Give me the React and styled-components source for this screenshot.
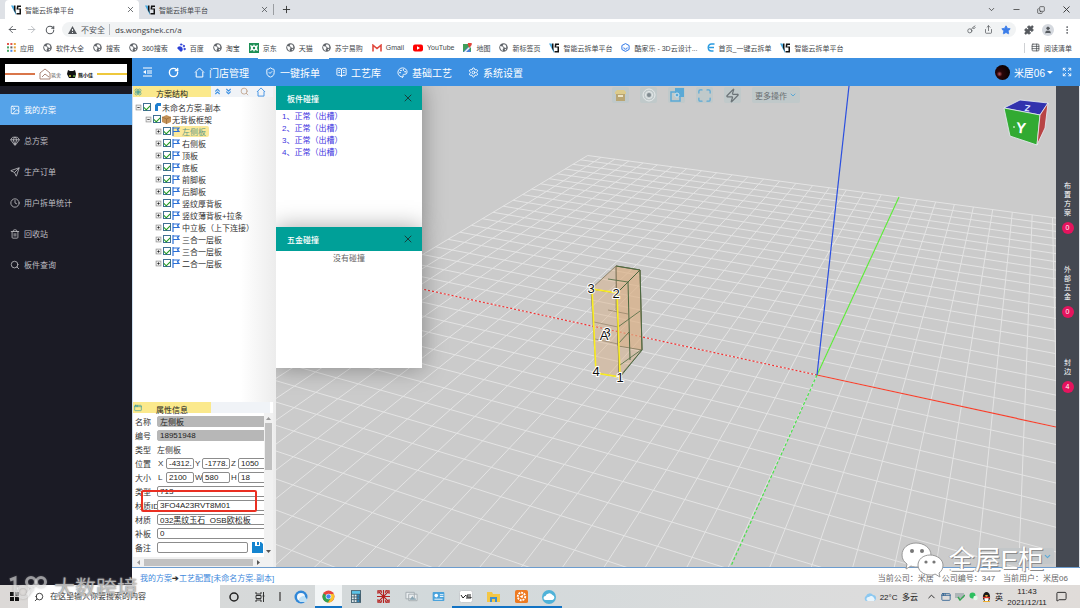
import React from "react";
import styled, { createGlobalStyle, css } from "styled-components";
import {
  ArrowLeft, ArrowRight, RotateCw, Key, Share, Star, Puzzle, User, EllipsisVertical,
  ChevronDown, ChevronUp, Minus, Copy, X, Plus, ShieldCheck, BookOpenText, Palette, Settings,
  Image, Gem, Send, Clock, Trash2, Search, ChevronsUp, ChevronsDown, Zap, Maximize, Expand,
  TableProperties, MessageSquare, PawPrint, Flower, AppWindow, Disc,
} from "lucide-react";

const GlobalStyle = createGlobalStyle`
  * { box-sizing: border-box; }
  body {
    margin: 0;
    font-family: "Liberation Sans", "Noto Sans CJK SC", sans-serif;
    font-size: 8px;
    color: #333;
    overflow: hidden;
  }
  button, input { font: inherit; color: inherit; }
  button { border: 0; padding: 0; background: none; cursor: pointer; }
  ul { list-style: none; margin: 0; padding: 0; }
  a { color: inherit; text-decoration: none; }
  svg { display: block; flex: none; }
`;

const Page = styled.div`
  display: flex;
  flex-direction: column;
  min-height: 100vh;
`;

/* ---------- browser ---------- */

const TabBar = styled.div`
  display: flex;
  align-items: center;
  height: 19px;
  background: #dee1e6;
  padding-left: 5px;
`;

const Tab = styled.div`
  display: flex;
  align-items: center;
  gap: 4px;
  width: 134px;
  height: 19px;
  padding: 0 4px 0 6px;
  font-size: 7px;
  color: #45494d;
  border-radius: 4px 4px 0 0;
  background: ${props => props.$active ? '#fff' : 'transparent'};

  button { margin-left: auto; }
`;

const NewTab = styled.button`
  border-left: 1px solid #9a9da1;
  padding-left: 7px;
`;

const WindowButtons = styled.div`
  display: flex;
  align-items: center;
  gap: 16px;
  margin-left: auto;
  padding-right: 8px;
`;

const AddressBar = styled.div`
  display: flex;
  align-items: center;
  gap: 8px;
  height: 21px;
  padding: 0 8px 0 7px;
  background: #fff;
  color: #55595e;
`;

const Address = styled.label`
  display: flex;
  flex: 1;
  align-items: center;
  gap: 4px;
  height: 15px;
  margin-left: -1px;
  padding: 0 5px 0 6px;
  border-radius: 8px;
  background: #f1f3f4;

  input {
    flex: 1;
    border: 0;
    border-left: 1px solid #b9bcc0;
    background: none;
    padding: 0 0 0 5px;
    height: 11px;
    font-family: "Open Sans", sans-serif;
    font-size: 8px;
    line-height: 11px;
    color: #3c4043;
  }
`;

const AddressIcons = styled.div`
  display: flex;
  gap: 8px;
`;

const Avatar = styled.span`
  display: flex;
  align-items: center;
  justify-content: center;
  width: 12px;
  height: 12px;
  border-radius: 50%;
  background: #d5d9df;
`;

const Bookmarks = styled.nav`
  display: flex;
  align-items: center;
  gap: 9px;
  height: 18px;
  padding: 0 8px 3px 7px;
  background: #fff;
  font-size: 7px;
  color: #45494d;
  white-space: nowrap;

  a {
    display: flex;
    align-items: center;
    gap: 4px;
  }
  a:last-child {
    margin-left: auto;
    border-left: 1px solid #cfd1d4;
    padding-left: 6px;
  }
`;

/* ---------- application frame ---------- */

const Shell = styled.div`
  display: flex;
  flex: 1;
`;

const Sidebar = styled.aside`
  width: 132px;
  flex: none;
  background: #1b1b25;
`;

const Brand = styled.div`
  height: 28px;
  padding: 6px 5px 4px;
  background: #000;
`;

const SideMenu = styled.nav`
  padding-top: 8px;
`;

const SideLink = styled.a`
  display: flex;
  align-items: center;
  gap: 4px;
  height: 31px;
  padding-left: 10px;
  font-size: 8px;
  color: ${props => props.$active ? '#fff' : '#bdbdc1'};
  background: ${props => props.$active ? '#55a3e9' : 'transparent'};
`;

const Workspace = styled.div`
  display: flex;
  flex: 1;
  flex-direction: column;
  min-width: 0;
`;

const TopNav = styled.header`
  display: flex;
  align-items: center;
  height: 28px;
  padding: 0 8px 0 10px;
  background: #3c90e2;
  color: #fff;
`;

const NavButtons = styled.div`
  display: flex;
  gap: 15px;
  margin-right: 8px;
`;

const NavLink = styled.a`
  display: flex;
  align-items: center;
  gap: 4px;
  height: 28px;
  padding: 0 9px 0 7px;
  font-size: 10px;
  border-top: 1px solid ${props => props.$active ? '#fff' : 'transparent'};
`;

const Account = styled.button`
  display: flex;
  align-items: center;
  gap: 4px;
  margin-left: auto;
  margin-right: 9px;
  font-size: 10px;
`;

const AccountPhoto = styled.span`
  width: 15px;
  height: 15px;
  border-radius: 50%;
  background: radial-gradient(circle at 30% 60%, #b9555a 0, #2a0508 20%, #0b0203 70%);
`;

const Caret = styled.span`
  border: 3px solid transparent;
  border-top-color: #fff;
  border-bottom: 0;
  margin-left: -2px;
`;

const Main = styled.main`
  display: flex;
  flex: 1;
`;

const LeftColumn = styled.div`
  display: flex;
  flex-direction: column;
  width: 144px;
  flex: none;
  border-left: 1px solid #cfe0f0;
  background: linear-gradient(90deg, #fff 108px, #ececec 143px);
`;

const PanelHead = styled.div`
  display: flex;
  align-items: center;
  height: 11px;
  margin-right: 3px;
  background: #f0f3f7;
  color: #3c90e2;
`;

const PanelTitle = styled.h2`
  display: flex;
  align-items: center;
  gap: 14px;
  width: 78px;
  height: 11px;
  margin: 0 2px 0 0;
  padding-left: 1px;
  background: #fbe98c;
  font-size: 8px;
  font-weight: 400;
  line-height: 11px;

  span { color: #222; padding-top: 5px; }
`;

const HeadTools = styled.div`
  display: flex;
  align-items: center;
  gap: 2px;

  button:nth-child(n + 3) { margin-left: 5px; }
`;

const Tree = styled.ul`
  flex: 1;
  padding-top: 4px !important;
`;

const TreeRow = styled.li`
  display: flex;
  align-items: center;
  gap: 1px;
  height: 12px;
  padding-left: ${props => 2 + props.$level * 10}px;
`;

const Expander = styled.button`
  position: relative;
  width: 7px;
  height: 7px;
  transform: scale(0.8);
  border: 1px solid #999;
  background:
    linear-gradient(#222, #222) center / 3px 1px no-repeat,
    linear-gradient(#222, #222) center / 1px ${props => props.$open ? 0 : 3}px no-repeat,
    #f2f2f2;
`;

const TreeLabel = styled.label`
  display: flex;
  align-items: center;
  gap: 1px;
  white-space: nowrap;

  input {
    appearance: none;
    display: grid;
    place-items: center;
    width: 8px;
    height: 8px;
    margin: 0;
    border: 1px solid #3f6f92;
    background: #fff;
  }
  input:checked::after {
    content: "";
    width: 5px;
    height: 3px;
    margin-top: -1px;
    border: solid #1f9a1f;
    border-width: 0 0 1px 1px;
    transform: rotate(-45deg);
  }
`;

const TreeName = styled.span`
  display: flex;
  align-items: center;
  gap: 1px;
  height: 11px;
  ${props => props.$selected && css`
    background: #fbe99a;
    border-radius: 2px;
    padding-right: 3px;
    color: #5f9a86;
  `}
`;

const TreeIcon = styled.span`
  display: flex;
  justify-content: ${props => props.$end ? 'flex-end' : 'flex-start'};
  width: 9px;
`;

const Properties = styled.section`
  position: relative;
  background: #fff;
  margin-right: 3px;
`;

const PropertyBody = styled.div`
  display: flex;
`;

const Form = styled.form`
  flex: 1;
  min-width: 0;
  height: 144px;
  overflow: hidden;
  padding-top: 1px;
`;

const Field = styled.div`
  display: flex;
  align-items: center;
  height: 14px;
  padding-left: 2px;
  white-space: nowrap;

  > label:first-child, > span:first-child {
    width: 22px;
    flex: none;
  }
`;

const Input = styled.input`
  width: ${props => props.$width || 120}px;
  flex: none;
  height: 11px;
  padding: 0 0 0 2px;
  border: 1px solid #8c8c8c;
  border-radius: 2px;
  background: #fff;
  color: #222;

  &:read-only {
    border-color: #b7b7b7;
    background: #b7b7b7;
  }
`;

const Axis = styled.label`
  width: ${props => props.$wide ? 8 : 9}px;
  padding-left: 1px;
  flex: none;
`;

const SaveButton = styled.button`
  margin-left: 4px;
`;

const ScrollY = styled.div`
  display: flex;
  flex-direction: column;
  align-items: center;
  justify-content: space-between;
  width: 9px;
  padding: 3px 0;
  background: #f1f1f1;

  i {
    width: 7px;
    height: 47px;
    margin: 2px 0 auto;
    background: #c1c1c1;
  }
`;

const ScrollX = styled.div`
  display: flex;
  align-items: center;
  gap: 3px;
  height: 10px;
  padding: 0 12px 0 3px;
  background: #f1f1f1;

  i {
    flex: 1;
    height: 7px;
    background: #c1c1c1;
  }
`;

const Marker = styled.div`
  position: absolute;
  left: 8px;
  top: 88px;
  width: 116px;
  height: 22px;
  border: 2px solid #ea2f22;
  border-radius: 2px;
`;

/* ---------- 3D view ---------- */

const Viewport = styled.section`
  position: relative;
  flex: 1;
  min-width: 0;
  background: #cbcbcb;
  overflow: hidden;
`;

const Scene = styled.svg`
  position: absolute;
  inset: 0;
  width: 100%;
  height: 100%;
`;

const SceneTools = styled.div`
  position: absolute;
  left: 336px;
  top: 1px;
  display: flex;
  gap: 11px;
`;

const SceneTool = styled.button`
  display: flex;
  align-items: center;
  justify-content: center;
  gap: 2px;
  min-width: 17px;
  height: 16px;
  padding: 0 ${props => props.$wide ? 3 : 1}px;
  border-radius: 2px;
  background: #c0c9ca;
  color: ${props => props.$color || '#5aa9d6'};
  white-space: nowrap;
`;

const ViewMenu = styled.button`
  position: absolute;
  right: 2px;
  bottom: 3px;
  display: flex;
  align-items: center;
  justify-content: flex-end;
  width: 62px;
  height: 16px;
  padding-right: 2px;
  border-radius: 2px;
  background: #c3c7c9;
  color: #5aa9d6;
`;

const Dialogs = styled.div`
  position: absolute;
  left: 0;
  top: 0;
  width: 146px;
`;

const Dialog = styled.section`
  height: 141px;
  background: #fff;
  box-shadow: 0 0 22px rgba(0, 0, 0, 0.35);
`;

const DialogHead = styled.header`
  display: flex;
  align-items: center;
  justify-content: space-between;
  height: 24px;
  padding: 0 8px 0 11px;
  background: #00a098;
  color: #fff;

  h3 { margin: 0; font-size: 8px; font-weight: 500; }
  button { color: #17403d; }
`;

const DialogBody = styled.ul`
  padding-top: 1px !important;
  color: #3c32e0;

  li {
    height: 12px;
    line-height: 12px;
    padding-left: 6px;
  }
`;

const EmptyNote = styled.p`
  margin: 0;
  padding-top: 2px;
  text-align: center;
  color: #666;
  line-height: 12px;
`;

const Rail = styled.aside`
  width: 24px;
  flex: none;
  padding-top: 95px;
  background: #444851;
  border-right: 1px solid #dfe3e8;
`;

const RailButton = styled.button`
  display: flex;
  flex-direction: column;
  align-items: center;
  gap: 5px;
  width: 100%;
  margin-bottom: ${props => props.$space}px;
  color: #fff;

  span {
    width: 7px;
    font-size: 7px;
    line-height: 9px;
  }
  b {
    width: 12px;
    height: 12px;
    border-radius: 50%;
    background: #e5145e;
    font-weight: 400;
    font-size: 7px;
    line-height: 12px;
  }
`;

const StatusBar = styled.footer`
  display: flex;
  align-items: center;
  height: 18px;
  padding: 2px 12px 0 8px;
  border-top: 1px solid #6c9cce;
  background: #fff;
  color: #666;

  nav { margin-right: auto; color: #4189dc; }
  nav b { color: #333; }
  span { margin-left: 8px; }
`;

/* ---------- desktop ---------- */

const Taskbar = styled.div`
  display: flex;
  align-items: center;
  height: 23px;
  background: linear-gradient(90deg, #dcd9d7, #d2d9db 40%, #dcdcdc 80%, #e0dcd9);
  color: #222;
`;

const StartButton = styled.button`
  display: flex;
  justify-content: center;
  width: 28px;
`;

const SearchBox = styled.label`
  display: flex;
  align-items: center;
  gap: 6px;
  width: 192px;
  height: 23px;
  padding-left: 6px;
  background: #fff;

  svg { transform: scaleX(-1); }
  input {
    flex: 1;
    min-width: 0;
    border: 0;
    padding: 0;
    background: none;
  }
  input::placeholder { color: #333; }
`;

const TaskButton = styled.button`
  display: flex;
  align-items: center;
  justify-content: center;
  width: ${props => props.$width || 28}px;
  height: 23px;
  padding-top: 2px;
  border-bottom: 2px solid ${props => props.$running ? '#1273c4' : 'transparent'};
  background: ${props => props.$active ? '#f2f5f6' : 'transparent'};
`;

const TaskGroup = styled.div`
  display: flex;
`;

const Tray = styled.div`
  display: flex;
  align-items: center;
  gap: 4px;
  margin-left: auto;
  padding-right: 13px;
  white-space: nowrap;

  time {
    width: 40px;
    text-align: center;
    font-size: 8px;
    line-height: 11px;
    margin-right: 5px;
  }
`;

/* stamps printed over the page corners */
const Stamp = styled.div`
  position: absolute;
  display: flex;
  align-items: center;
  pointer-events: none;
  white-space: nowrap;
  ${props => props.$corner === 'right' ? css`
    right: 36px;
    bottom: 28px;
    gap: 5px;
    font-size: 26px;
    line-height: 40px;
    color: #fff;
    text-shadow: 1px 1px 0 #8a8a8a, -1px 0 0 #b5b5b5;
  ` : css`
    left: 9px;
    bottom: 6px;
    gap: 7px;
    font-size: 21px;
    line-height: 28px;
    color: rgba(255, 255, 255, 0.5);
    text-shadow: 0 0 1px rgba(110, 110, 110, 0.9), 0 0 2px rgba(130, 130, 130, 0.8);

    svg { filter: drop-shadow(0 0 1px rgba(110, 110, 110, 0.9)); }
  `}
`;

/* ---------- drawings ---------- */

const VgLogo = () => (
  <svg width="10" height="10" viewBox="0 0 20 20">
    <path d="M0 1h5l5 14v5z" fill="#49a9dd" />
    <path d="M6 1h3v16l-3-7z" fill="#111" />
    <path d="M20 1h-8l-1 8h6v7h-6v3h9V7h-6l1-3h5z" fill="#111" />
  </svg>
);

const GlobeIcon = () => (
  <svg width="9" height="9" viewBox="0 0 18 18">
    <circle cx="9" cy="9" r="8.500" fill="#5f6368" />
    <path d="M2.500 6l4 1 3 3-2 2v4C4 15 1.500 10 2.500 6zM9 2.500l4 1 2 5-3 2-2-3-3-1zM11 13l4-2-2 4z" fill="#fff" />
  </svg>
);

const AppsIcon = () => (
  <svg width="9" height="9" viewBox="0 0 9 9">
    {['#e2574c', '#e2574c', '#e8a23b', '#4aa564', '#5f6368', '#e8a23b', '#4aa564', '#4a86e8', '#e8a23b'].map((fill, i) => (
      <rect key={i} x={(i % 3) * 3.4} y={Math.floor(i / 3) * 3.4} width="2" height="2" fill={fill} />
    ))}
  </svg>
);

const WarningIcon = () => (
  <svg width="9" height="8" viewBox="0 0 9 8">
    <path d="M4.500 0L9 8H0z" fill="#55595e" />
    <path d="M4.500 3v2M4.500 6v1" stroke="#f1f3f4" />
  </svg>
);

const GmailIcon = () => (
  <svg width="10" height="8" viewBox="0 0 10 8">
    <path d="M1 7.500V1.200L5 4.500 9 1.200v6.300" fill="none" stroke="#e0483c" strokeWidth="1.600" />
  </svg>
);

const YoutubeIcon = () => (
  <svg width="10" height="8" viewBox="0 0 10 8">
    <rect y=".5" width="10" height="7" rx="2" fill="#f00" />
    <path d="M4 2.300v3.400L7 4z" fill="#fff" />
  </svg>
);

const MapIcon = () => (
  <svg width="9" height="9" viewBox="0 0 9 9">
    <path d="M0 1h8v8H0z" fill="#3f9e5a" />
    <path d="M0 9l5-5 3 5z" fill="#4a80d8" />
    <path d="M1 9L8 2v2L3 9z" fill="#f3f3f3" />
    <path d="M6.500 5L5 2a2 2 0 1 1 3.600 0z" fill="#e2453a" />
  </svg>
);

const JdIcon = () => (
  <svg width="10" height="10" viewBox="0 0 10 10">
    <rect width="10" height="10" fill="#1d8f55" />
    <path d="M5 1l1 2 3-1-1 3 1 3-3-1-1 2-1-2-3 1 1-3-1-3 3 1z" fill="#fff" />
    <circle cx="5" cy="5" r="1.200" fill="#1d8f55" />
  </svg>
);

const SmileIcon = () => (
  <svg width="9" height="9" viewBox="0 0 9 9" fill="none" stroke="#2f77e6">
    <path d="M4.500.6l3.600 1.900v4L4.500 8.400.9 6.500v-4z" />
    <path d="M2.800 4.500a1.700 1.700 0 0 0 3.400 0" />
  </svg>
);

const EIcon = () => (
  <svg width="8" height="9" viewBox="0 0 8 9">
    <path d="M7.500 1H4.500C2.500 1 1.200 2.500 1.200 4.500S2.500 8 4.500 8H6.500M2 4.500h5" fill="none" stroke="#2a9be0" strokeWidth="1.400" />
  </svg>
);

const MenuIcon = () => (
  <svg width="11" height="10" viewBox="0 0 11 10">
    <path d="M1 1h9M5 4h5M5 6h5M1 9h9" stroke="#fff" strokeWidth="1.200" />
    <path d="M1 5l3-2v4z" fill="#fff" />
  </svg>
);

const HomeIcon = ({ size = 11 }) => (
  <svg width={size} height={size} viewBox="0 0 11 11">
    <path d="M1 5.500L5.500 1 10 5.500M2.200 5v5h6.600V5" fill="none" stroke="currentColor" />
  </svg>
);

const FlagIcon = () => (
  <svg width="8" height="9" viewBox="0 0 8 9">
    <path d="M1 0v9M1 1h6L5.500 2.800 7 4.500H1" fill="none" stroke="#2b6fd6" strokeWidth="1.200" />
  </svg>
);

const CornerIcon = () => (
  <svg width="6" height="8" viewBox="0 0 6 8">
    <path d="M0 8V2L2 0h4v3H3v5z" fill="#1f7fd0" />
  </svg>
);

const BoxIcon = () => (
  <svg width="9" height="9" viewBox="0 0 9 9">
    <path d="M4.500 0L9 2v5L4.500 9 0 7V2z" fill="#c4935a" />
    <path d="M0 2l4.500 2L9 2M4.500 4v5" fill="none" stroke="#8e6334" strokeWidth=".6" />
  </svg>
);

const DiskIcon = () => (
  <svg width="11" height="11" viewBox="0 0 11 11">
    <path d="M0 0h9l2 2v9H0z" fill="#1484cf" />
    <path d="M3 0h5v4H3z" fill="#fff" />
    <path d="M5 0h2v3H5z" fill="#1484cf" />
  </svg>
);

const Arrow = ({ turn, color = '#555' }) => (
  <svg width="5" height="5" viewBox="0 0 5 5">
    <path d="M0 4L2.500 1 5 4z" fill={color} transform={`rotate(${turn} 2.500 2.500)`} />
  </svg>
);

const BrandArt = () => (
  <svg width="100%" height="18" viewBox="0 0 122 18">
    <rect width="122" height="18" fill="#fff" />
    <path d="M0 10h30" stroke="#d9764a" strokeWidth="2" />
    <path d="M92 10h30" stroke="#eec83c" strokeWidth="2" />
    <path d="M35 9l5-4 5 4v6H35zM37 13l3-3 4 3" fill="none" stroke="#a98679" />
    <text x="46" y="13" fontSize="5" fill="#555">筑舍</text>
    <path d="M63 6l2 1h3l2-1 1 4-1 4h-6l-2-4z" fill="#111" />
    <circle cx="65" cy="12" r="1" fill="#d3c83c" />
    <circle cx="69" cy="12" r="1" fill="#5aa83c" />
    <text x="73" y="13" fontSize="5" fontWeight="700" fill="#111">熊小佳</text>
  </svg>
);

const ChromeIcon = () => (
  <svg width="13" height="13" viewBox="0 0 26 26">
    <circle cx="13" cy="13" r="12" fill="#e8453c" />
    <path d="M2.600 7A12 12 0 0 0 12 25l6-9-5-3z" fill="#2fa34f" />
    <path d="M12 25A12 12 0 0 0 23.500 8H13l5 8z" fill="#f9c32b" />
    <circle cx="13" cy="13" r="5.600" fill="#fff" />
    <circle cx="13" cy="13" r="4.400" fill="#4285f4" />
  </svg>
);

const BrowserIcon = () => (
  <svg width="14" height="14" viewBox="0 0 14 14">
    <circle cx="7" cy="7" r="6.500" fill="#2f87d8" />
    <circle cx="7" cy="7" r="4" fill="#f2f7fb" />
    <path d="M6 12a3 3 0 0 1 1-5 3 3 0 0 1 5 1 2.500 2.500 0 0 1 0 4z" fill="#bfe0f5" />
  </svg>
);

const CalcIcon = () => (
  <svg width="10" height="13" viewBox="0 0 11 14">
    <rect width="11" height="14" fill="#44606f" />
    <rect x="1" y="1" width="9" height="3" fill="#5cc4e8" />
    {[5, 8, 11].map(y => [1, 4, 7].map(x => (
      <rect key={`${x}-${y}`} x={x} y={y} width="2" height="2" fill={x === 7 ? '#2d8ac4' : '#e6eef2'} />
    )))}
  </svg>
);

const RedKnotIcon = () => (
  <svg width="13" height="13" viewBox="0 0 14 14" stroke="#b5201f" fill="none" strokeWidth="1.300">
    <path d="M7 0v14M0 7h14M2 2l10 10M12 2L2 12M1 4V1h3M10 1h3v3M13 10v3h-3M4 13H1v-3M4 0l1 3M10 0L9 3M4 14l1-3M10 14l-1-3" />
  </svg>
);

const PhotosIcon = () => (
  <svg width="13" height="11" viewBox="0 0 14 11">
    <path d="M1 1h9v7H1zM4 3h9v7H4z" fill="#e9edef" stroke="#a3acb0" />
    <path d="M5 9l3-4 2 3 1-1 1 2z" fill="#8aa6b4" />
  </svg>
);

const ControlIcon = () => (
  <svg width="13" height="9" viewBox="0 0 13 10">
    <rect width="13" height="10" rx="1" fill="#4aa3dc" />
    <circle cx="4" cy="4" r="2" fill="#fff" />
    <path d="M8 3h4M8 5h4M2 8h9" stroke="#fff" />
  </svg>
);

const VgTile = () => (
  <svg width="14" height="13" viewBox="0 0 14 13">
    <rect x=".5" y=".5" width="13" height="12" rx="2" fill="#fff" stroke="#c9cdd0" />
    <path d="M2 5l2 3 3-3M12 5H8v2h4v1H7" fill="none" stroke="#222" />
  </svg>
);

const FolderIcon = () => (
  <svg width="13" height="12" viewBox="0 0 13 12">
    <path d="M0 1h5l1 2h7v8H0z" fill="#f4c746" />
    <path d="M3 11V6h7v5H8V8H5v3z" fill="#3f8fd0" />
  </svg>
);

const OrangeIcon = () => (
  <svg width="13" height="13" viewBox="0 0 14 14">
    <rect width="14" height="14" rx="2" fill="#ee7a22" />
    <circle cx="7" cy="7" r="4" fill="none" stroke="#fff" strokeWidth="2" strokeDasharray="2 1" />
    <path d="M5 7l4-2-1 4z" fill="#fff" />
  </svg>
);

const CloudTile = () => (
  <svg width="14" height="14" viewBox="0 0 14 14">
    <circle cx="7" cy="7" r="7" fill="#4fb2d8" />
    <path d="M3.500 10a2 2 0 0 1 0-4 4 4 0 0 1 7-1 2.600 2.600 0 0 1 0 5z" fill="#fff" />
  </svg>
);

const Cloud = () => (
  <svg width="13" height="9" viewBox="0 0 13 9">
    <path d="M3 9a3 3 0 0 1 0-5 4 4 0 0 1 7-1 3 3 0 0 1 0 6z" fill="#8cc8f0" />
    <path d="M5 9a2 2 0 0 1 1-4 3 3 0 0 1 5 1 2 2 0 0 1 0 3z" fill="#e8f5fd" />
  </svg>
);

const Penguin = () => (
  <svg width="9" height="10" viewBox="0 0 9 10">
    <ellipse cx="4.500" cy="5" rx="3.600" ry="5" fill="#181818" />
    <ellipse cx="4.500" cy="7" rx="2.200" ry="2.500" fill="#fff" />
    <path d="M1 5.500h7" stroke="#e0342c" strokeWidth="1.400" />
    <ellipse cx="4.500" cy="3.800" rx="1.600" ry=".7" fill="#f2b02c" />
    <path d="M1 9.500h7" stroke="#f2b02c" />
  </svg>
);

const WechatMark = () => (
  <svg width="43" height="36" viewBox="0 0 43 36" stroke="#999" strokeWidth="1">
    <path d="M15 1C7 1 1 6 1 13c0 4 2 7 5 9l-1 5 5-3c2 1 4 1 6 1 8 0 14-5 14-12S23 1 15 1z" fill="#fff" />
    <path d="M29 13c-7 0-12 4.500-12 10s5 10 12 10c2 0 4 0 5-1l5 3-1-4c3-2 4-5 4-8 0-5.500-6-10-13-10z" fill="#fff" />
    <g fill="#777" stroke="none">
      <circle cx="11" cy="9" r="2" /><circle cx="21" cy="9" r="2" />
      <circle cx="25" cy="20" r="1.600" /><circle cx="33" cy="20" r="1.600" />
    </g>
  </svg>
);

const CoinMark = () => (
  <svg width="38" height="26" viewBox="0 0 38 26" fill="none" stroke="currentColor" strokeWidth="3">
    <path d="M1 5l5-2v18M6 13h3" />
    <circle cx="14" cy="17" r="5.500" />
    <circle cx="22" cy="7" r="4.500" />
    <circle cx="32" cy="7" r="4.500" />
    <path d="M18 20l6-7" />
  </svg>
);

/* ---------- ground grid ---------- */

const ORIGIN = [817, 375];
const VANISH_X = [-1424, -113];
const VANISH_Y = [1045, -119];
const CELLS = 20;
const STEP_X = 0.242 / CELLS;
const STEP_Y = 0.563 / CELLS;

// Projects a floor point (in cells from the origin) on to the view
const project = (u, v) => {
  const a = u * STEP_X;
  const b = v * STEP_Y;
  return [0, 1].map(i => ((ORIGIN[i] + a * VANISH_X[i] + b * VANISH_Y[i]) / (1 + a + b)).toFixed(1));
};

const floorLine = (from, to) => `M${project(...from).join(' ')}L${project(...to).join(' ')}`;

const gridPath = Array.from({ length: CELLS * 2 + 1 }, (_, i) => i - CELLS)
  .map(n => floorLine([n, -CELLS], [n, CELLS]) + floorLine([-CELLS, n], [CELLS, n]))
  .join('');

const CabinetLabel = ({ x, y, children }) => (
  <text x={x} y={y} fontSize="13" textAnchor="middle" fill="#111" stroke="#fff" strokeWidth="2" paintOrder="stroke">{children}</text>
);

const SceneDrawing = () => (
  <Scene viewBox="276 86 780 481" preserveAspectRatio="xMidYMid slice">
    <path d={gridPath} stroke="#e4e4e4" strokeWidth="1" fill="none" />
    <g fill="none" strokeWidth="1.200">
      <path d="M817 375L422 289" stroke="#e33" strokeDasharray="2 2" />
      <path d="M817 375L1056 427" stroke="#f5402c" />
      <path d="M817 375L731 566" stroke="#4be04b" strokeDasharray="3 2" />
      <path d="M817 375L899 197" stroke="#5fe83c" />
      <path d="M817 375L849 86" stroke="#2b4fe0" />
    </g>

    <g fill="#dcb083" fillOpacity=".45" stroke="#7c7455" strokeWidth=".8">
      <path d="M591 289L616 266 640 270 617 293z" />
      <path d="M591 289L617 293 619 377 596 373z" />
      <path d="M617 293L640 270 642 350 619 377z" />
      <path d="M616 266L640 270 642 350 618 346z" />
    </g>
    <g fill="none" stroke="#49683f" strokeWidth="1">
      <path d="M616 266L640 270 642 350 620 377M617 293L640 270M628 282L630 360" />
      <path d="M618 327L640 311M618 344L629 332M620 365L641 350M608 279L628 282" strokeWidth=".8" />
      <path d="M594 322L618 327M595 339L618 344M608 310L628 314M616 266V310" strokeWidth=".6" stroke="#84755a" />
    </g>
    <path d="M592 289L617 293 620 377 596 373z" fill="none" stroke="#fbee23" strokeWidth="1.600" />
    <CabinetLabel x={591} y={293}>3</CabinetLabel>
    <CabinetLabel x={616} y={298}>2</CabinetLabel>
    <CabinetLabel x={596} y={376}>4</CabinetLabel>
    <CabinetLabel x={620} y={382}>1</CabinetLabel>
    <CabinetLabel x={607} y={337}>3</CabinetLabel>
    <CabinetLabel x={604} y={340}>A</CabinetLabel>

    <g stroke="#e9eef5" strokeWidth=".8" strokeLinejoin="round">
      <path d="M1004 108L1020 100 1048 103 1040 115z" fill="#3232ae" />
      <path d="M1004 108L1040 115 1037 145 1010 136z" fill="#32aa32" />
      <path d="M1040 115L1048 103 1045 128 1037 145z" fill="#b84444" />
    </g>
    <text x="1016" y="133" fontSize="15" fontWeight="700" fill="#fff" transform="rotate(6 1021 128)">Y</text>
    <path d="M1013 127h2" stroke="#fff" />
    <text x="1024" y="111" fontSize="9" fontWeight="700" fill="#dfe2ff" transform="rotate(188 1027 108)">Z</text>
  </Scene>
);

/* ---------- data ---------- */

const bookmarks = [
  [<AppsIcon />, '应用'], [<GlobeIcon />, '软件大全'], [<GlobeIcon />, '搜索'], [<GlobeIcon />, '360搜索'],
  [<PawPrint size={9} color="#2b3fd6" fill="#2b3fd6" />, '百度'], [<GlobeIcon />, '淘宝'], [<JdIcon />, '京东'],
  [<GlobeIcon />, '天猫'], [<GlobeIcon />, '苏宁易购'], [<GmailIcon />, 'Gmail'], [<YoutubeIcon />, 'YouTube'],
  [<MapIcon />, '地图'], [<GlobeIcon />, '新标签页'], [<VgLogo />, '智能云拆单平台'],
  [<SmileIcon />, '酷家乐 - 3D云设计...'], [<EIcon />, '首页_一键云拆单'], [<VgLogo />, '智能云拆单平台'],
  [<TableProperties size={9} />, '阅读清单'],
];

const sideLinks = [
  [Image, '我的方案'], [Gem, '总方案'], [Send, '生产订单'],
  [Clock, '用户拆单统计'], [Trash2, '回收站'], [Search, '板件查询'],
];

const navLinks = [
  [HomeIcon, '门店管理'], [ShieldCheck, '一键拆单'], [BookOpenText, '工艺库'],
  [Palette, '基础工艺'], [Settings, '系统设置'],
];

const treeRows = [
  { level: 0, name: '未命名方案-副本' },
  { level: 1, name: '无背板框架' },
  ...['左侧板', '右侧板', '顶板', '底板', '前脚板', '后脚板', '竖纹厚背板', '竖纹薄背板+拉条',
    '中立板（上下连接）', '三合一层板', '三合一层板', '二合一层板'].map(name => ({ level: 2, name })),
];

const treeIcons = [<CornerIcon />, <BoxIcon />, <FlagIcon />];

const railItems = [['布置方案', 0, 31], ['外部五金', 0, 40], ['封边', 4, 0]];

const taskIcons = [
  [<BrowserIcon />], [<ChromeIcon />, true, true], [<CalcIcon />], [<RedKnotIcon />], [<PhotosIcon />],
  [<ControlIcon />], [<VgTile />, true], [<FolderIcon />, true], [<OrangeIcon />, true], [<CloudTile />, true],
];

const TripleField = ({ label, items }) => (
  <Field>
    <span>{label}</span>
    {items.map(([axis, value], i) => (
      <React.Fragment key={axis}>
        <Axis htmlFor={`axis-${axis}`} $wide={i > 0}>{axis}</Axis>
        <Input id={`axis-${axis}`} $width={28} defaultValue={value} />
      </React.Fragment>
    ))}
  </Field>
);

const TextField = ({ id, label, value, width, readOnly, children }) => (
  <Field>
    <label htmlFor={id}>{label}</label>
    <Input id={id} $width={width} defaultValue={value} readOnly={readOnly} />
    {children}
  </Field>
);

const BrowserChrome = () => (
  <>
    <TabBar>
      <Tab $active><VgLogo />智能云拆单平台<button aria-label="关闭标签页"><X size={9} /></button></Tab>
      <Tab><VgLogo />智能云拆单平台<button aria-label="关闭标签页"><X size={9} /></button></Tab>
      <NewTab aria-label="新标签页"><Plus size={11} /></NewTab>
      <WindowButtons>
        <button aria-label="搜索标签页"><ChevronDown size={9} /></button>
        <button aria-label="最小化"><Minus size={9} /></button>
        <button aria-label="还原"><Copy size={8} style={{ transform: 'scaleY(-1)' }} /></button>
        <button aria-label="关闭"><X size={11} /></button>
      </WindowButtons>
    </TabBar>
    <AddressBar>
      <button aria-label="后退"><ArrowLeft size={11} /></button>
      <button aria-label="前进"><ArrowRight size={11} color="#b8bbbf" /></button>
      <button aria-label="刷新"><RotateCw size={10} strokeWidth={2.500} /></button>
      <Address>
        <WarningIcon />
        不安全
        <input aria-label="地址" defaultValue="ds.wongshek.cn/a" />
        <AddressIcons>
          <Key size={9} />
          <Share size={9} />
          <Star size={10} fill="#3b7de9" stroke="#3b7de9" />
        </AddressIcons>
      </Address>
      <Puzzle size={10} fill="#55595e" />
      <Avatar><User size={8} fill="#55595e" /></Avatar>
      <EllipsisVertical size={10} />
    </AddressBar>
    <Bookmarks>
      {bookmarks.map(([icon, name], i) => <a href="#" key={i}>{icon}{name}</a>)}
    </Bookmarks>
  </>
);

const TreePanel = () => (
  <>
    <PanelHead>
      <PanelTitle><Flower size={8} color="#3a9a9a" /><span>方案结构</span></PanelTitle>
      <HeadTools>
        <button aria-label="全部折叠"><ChevronsUp size={9} strokeWidth={3} /></button>
        <button aria-label="全部展开"><ChevronsDown size={9} strokeWidth={3} /></button>
        <button aria-label="查找"><Search size={9} color="#b99a80" /></button>
        <button aria-label="主页"><HomeIcon size={10} /></button>
      </HeadTools>
    </PanelHead>
    <Tree>
      {treeRows.map(({ level, name }, i) => (
        <TreeRow key={i} $level={level}>
          <Expander $open={level < 2} aria-label="展开" />
          <TreeLabel>
            <input type="checkbox" defaultChecked />
            <TreeName $selected={i === 2}>
              <TreeIcon $end={level === 0}>{treeIcons[level]}</TreeIcon>
              {name}
            </TreeName>
          </TreeLabel>
        </TreeRow>
      ))}
    </Tree>
  </>
);

const PropertyPanel = () => (
  <Properties>
    <PanelHead>
      <PanelTitle><AppWindow size={8} color="#3a9a9a" /><span>属性信息</span></PanelTitle>
    </PanelHead>
    <PropertyBody>
      <Form>
        <TextField id="name" label="名称" value="左侧板" readOnly />
        <TextField id="code" label="编号" value="18951948" readOnly />
        <Field><span>类型</span>左侧板</Field>
        <TripleField label="位置" items={[['X', '-4312.'], ['Y', '-1778.'], ['Z', '1050']]} />
        <TripleField label="大小" items={[['L', '2100'], ['W', '580'], ['H', '18']]} />
        <TextField id="kind" label="类型" value="713" />
        <TextField id="materialId" label="材质ID" value="3FO4A23RVT8M01" />
        <TextField id="material" label="材质" value="032黑纹玉石  OSB欧松板" />
        <TextField id="patch" label="补板" value="0" />
        <TextField id="remark" label="备注" value="" width={91}>
          <SaveButton type="button" aria-label="保存"><DiskIcon /></SaveButton>
        </TextField>
      </Form>
      <ScrollY><Arrow turn={0} color="#999" /><i /><Arrow turn={180} /></ScrollY>
    </PropertyBody>
    <ScrollX><Arrow turn={-90} color="#999" /><i /><Arrow turn={90} /></ScrollX>
    <Marker />
  </Properties>
);

const App = () => (
  <Page>
    <GlobalStyle />
    <BrowserChrome />
    <Shell>
      <Sidebar>
        <Brand><BrandArt /></Brand>
        <SideMenu>
          {sideLinks.map(([Icon, name], i) => (
            <SideLink href="#" key={name} $active={i === 0}><Icon size={10} />{name}</SideLink>
          ))}
        </SideMenu>
      </Sidebar>
      <Workspace>
        <TopNav>
          <NavButtons>
            <button aria-label="收起菜单"><MenuIcon /></button>
            <button aria-label="刷新"><RotateCw size={11} strokeWidth={3} /></button>
          </NavButtons>
          {navLinks.map(([Icon, name], i) => (
            <NavLink href="#" key={name} $active={i === 1}><Icon size={11} />{name}</NavLink>
          ))}
          <Account><AccountPhoto />米居06<Caret /></Account>
          <button aria-label="全屏"><Expand size={10} /></button>
        </TopNav>
        <Main>
          <LeftColumn>
            <TreePanel />
            <PropertyPanel />
          </LeftColumn>
          <Viewport>
            <SceneDrawing />
            <SceneTools>
              <SceneTool aria-label="柜体">
                <svg width="13" height="13" viewBox="0 0 13 13">
                  <path d="M1 3l2-2h7l2 2v2H1z" fill="#dccb8c" />
                  <path d="M2 5h9v7H2z" fill="#b9a673" />
                  <path d="M4 6h5v2H4z" fill="#ece5c8" />
                </svg>
              </SceneTool>
              <SceneTool aria-label="聚焦" $color="#e9edee">
                <svg width="14" height="14" viewBox="0 0 14 14">
                  <circle cx="7" cy="7" r="6" fill="none" stroke="#e6eaeb" />
                  <circle cx="7" cy="7" r="3.500" fill="none" stroke="#e6eaeb" />
                  <circle cx="7" cy="7" r="2" fill="#7f8a8f" />
                </svg>
              </SceneTool>
              <SceneTool aria-label="复制">
                <svg width="14" height="14" viewBox="0 0 14 14">
                  <path d="M5 0h9v9H5z" fill="#5aa9d6" />
                  <path d="M5 4H1v9h9V9" fill="none" stroke="#5aa9d6" strokeWidth="1.500" />
                  <circle cx="7" cy="7" r="2" fill="none" stroke="#dbe8ee" />
                </svg>
              </SceneTool>
              <SceneTool aria-label="适应窗口"><Maximize size={15} /></SceneTool>
              <SceneTool aria-label="碰撞检测" $color="#6b7377"><Zap size={15} /></SceneTool>
              <SceneTool $wide $color="#6a6f72">更多操作<ChevronDown size={8} color="#5aa9d6" strokeWidth={3} /></SceneTool>
            </SceneTools>
            <ViewMenu aria-label="视图菜单"><ChevronDown size={9} strokeWidth={3} /></ViewMenu>
            <Dialogs>
              <Dialog>
                <DialogHead><h3>板件碰撞</h3><button aria-label="关闭"><X size={12} /></button></DialogHead>
                <DialogBody>
                  {[1, 2, 3, 4].map(n => <li key={n}>{n}、正常（出槽）</li>)}
                </DialogBody>
              </Dialog>
              <Dialog>
                <DialogHead><h3>五金碰撞</h3><button aria-label="关闭"><X size={12} /></button></DialogHead>
                <EmptyNote>没有碰撞</EmptyNote>
              </Dialog>
            </Dialogs>
          </Viewport>
          <Rail>
            {railItems.map(([name, count, space]) => (
              <RailButton key={name} $space={space}><span>{name}</span><b>{count}</b></RailButton>
            ))}
          </Rail>
        </Main>
        <StatusBar>
          <nav><a href="#">我的方案</a><b>➔</b><a href="#">工艺配置[未命名方案-副本]</a></nav>
          <span>当前公司：米居</span>
          <span>公司编号：347</span>
          <span>当前用户：米居06</span>
        </StatusBar>
      </Workspace>
    </Shell>
    <Taskbar>
      <StartButton aria-label="开始">
        <svg width="9" height="9" viewBox="0 0 9 9"><path d="M0 0h4v4H0zM5 0h4v4H5zM0 5h4v4H0zM5 5h4v4H5z" fill="#111" /></svg>
      </StartButton>
      <SearchBox>
        <Search size={10} />
        <input placeholder="在这里输入你要搜索的内容" aria-label="搜索" />
      </SearchBox>
      <TaskGroup>
        <TaskButton aria-label="语音助手">
          <svg width="10" height="10" viewBox="0 0 10 10"><circle cx="5" cy="5" r="4" fill="none" stroke="#222" strokeWidth="1.500" /></svg>
        </TaskButton>
        <TaskButton aria-label="任务视图" $width={24}>
          <svg width="10" height="10" viewBox="0 0 10 10" fill="none" stroke="#333"><path d="M1 0v2h5V0M1 3.500h5v3H1zM1 10V8h5v2M8.500 0v10M7.500 4h2" /></svg>
        </TaskButton>
        <TaskButton aria-label="分隔" $width={15}>
          <svg width="2" height="9" viewBox="0 0 2 9"><path d="M1 0v9" stroke="#777" strokeWidth="2" /></svg>
        </TaskButton>
        {taskIcons.map(([icon, running, active], i) => (
          <TaskButton key={i} $width={i % 2 ? 27 : 28} $running={running} $active={active} aria-label={`应用 ${i + 1}`}>{icon}</TaskButton>
        ))}
      </TaskGroup>
      <Tray>
        <Cloud />
        22°C&nbsp; 多云
        <ChevronUp size={11} style={{ marginLeft: 4 }} />
        <AppWindow size={10} color="#2b5f8f" />
        <svg width="10" height="9" viewBox="0 0 10 9"><rect y="1" width="9" height="5" fill="#aeb6b8" /><path d="M3 5l2 3 5-5" stroke="#3aa655" strokeWidth="1.500" fill="none" /></svg>
        <svg width="9" height="9" viewBox="0 0 9 9"><circle cx="3.500" cy="3.500" r="3" fill="#2dbf5f" /><circle cx="6.500" cy="6" r="2.200" fill="#e7f7ec" /></svg>
        <Penguin />
        英
        <time>11:43<br />2021/12/11</time>
        <MessageSquare size={11} />
      </Tray>
    </Taskbar>
    <Stamp $corner="left"><CoinMark />大数跨境</Stamp>
    <Stamp $corner="right"><WechatMark />全屋E柜</Stamp>
  </Page>
);

export default App;
